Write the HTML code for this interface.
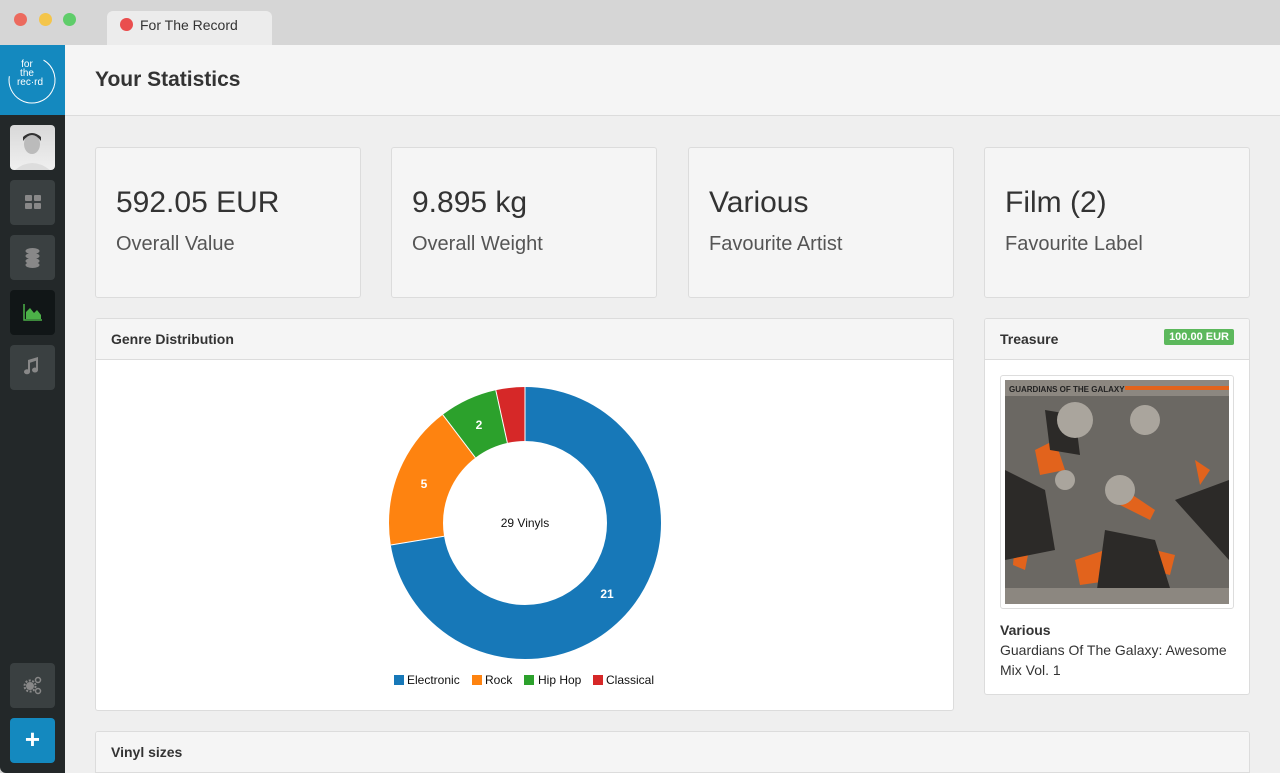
<!DOCTYPE html><html style="width:1280px;height:773px;overflow:hidden"><head><meta charset="utf-8"><style>
*{box-sizing:border-box;margin:0;padding:0}
body{width:1280px;height:773px;overflow:hidden;background:#d6d6d6;font-family:"Liberation Sans",sans-serif;position:relative}
.abs{position:absolute}
.dot{position:absolute;top:13px;width:13px;height:13px;border-radius:50%}
.tab{position:absolute;left:107px;top:11px;width:165px;height:34px;background:#ececec;border-radius:6px 6px 0 0;font-size:14px;color:#333;padding:6px 0 0 33px}
.side{position:absolute;left:0;top:45px;width:65px;height:728px;background:#232829;border-bottom-left-radius:6px}
.logo{position:absolute;left:0;top:0;width:65px;height:70px;background:#1489bf}
.sb{position:absolute;left:10px;width:45px;height:45px;border-radius:4px;background:#3a4041}
.main{position:absolute;left:65px;top:45px;width:1215px;height:728px;background:#efefef;overflow:hidden}
.hdr{position:absolute;left:0;top:0;width:1215px;height:71px;background:#f5f5f5;border-bottom:1px solid #dcdcdc;font-weight:bold;font-size:21px;color:#333;padding:23px 0 0 30px}
.card{position:absolute;top:102px;width:266px;height:151px;background:#f5f5f5;border:1px solid #dcdcdc;border-radius:3px;padding:38px 0 0 20px;color:#333}
.card .v{font-size:30px}
.card .l{font-size:20px;margin-top:13px;color:#555}
.panel{position:absolute;background:#fff;border:1px solid #dcdcdc;border-radius:3px;overflow:hidden}
.ph{height:41px;background:#f5f5f5;border-bottom:1px solid #dcdcdc;font-weight:bold;font-size:14px;color:#333;padding:12px 0 0 15px}
</style></head><body>
<div class="dot" style="left:14px;background:#ec6a5e"></div>
<div class="dot" style="left:39px;background:#f4c54a"></div>
<div class="dot" style="left:63px;background:#5fcd6a"></div>
<div class="tab"><span style="position:absolute;left:13px;top:7px;width:13px;height:13px;border-radius:50%;background:#ea4e4e"></span>For The Record</div>
<div class="side">
 <div class="logo"><svg width="65" height="70"><circle cx="32" cy="35" r="23" fill="none" stroke="#fff" stroke-width="1" stroke-dasharray="100 45" transform="rotate(-60 32 35)"/><text x="27" y="22" fill="#fff" font-size="10" text-anchor="middle" font-family="Liberation Sans">for</text><text x="27" y="31" fill="#fff" font-size="10" text-anchor="middle" font-family="Liberation Sans">the</text><text x="30" y="40" fill="#fff" font-size="10" text-anchor="middle" font-family="Liberation Sans">rec·rd</text></svg></div>
 <div class="sb" style="top:80px;background:linear-gradient(#d8d8d8,#f0f0f0)"><svg width="45" height="45"><ellipse cx="22" cy="19" rx="8" ry="10" fill="#bbb"/><path d="M13 16q9-12 18 0v-4q-9-8-18 0z" fill="#333"/><path d="M5 45q17-14 35 0z" fill="#ddd"/></svg></div>
 <div class="sb" style="top:135px"><svg width="45" height="45" fill="#888"><rect x="15" y="15" width="7" height="6" rx="1"/><rect x="24" y="15" width="7" height="6" rx="1"/><rect x="15" y="23" width="7" height="6" rx="1"/><rect x="24" y="23" width="7" height="6" rx="1"/></svg></div>
 <div class="sb" style="top:190px"><svg width="45" height="45" fill="#888"><ellipse cx="22.5" cy="16" rx="7" ry="3"/><ellipse cx="22.5" cy="21" rx="7" ry="3"/><ellipse cx="22.5" cy="26" rx="7" ry="3"/><ellipse cx="22.5" cy="30" rx="7" ry="3"/></svg></div>
 <div class="sb" style="top:245px;background:#111617"><svg width="45" height="45"><path d="M14 14v16h18" stroke="#4cb148" stroke-width="1.5" fill="none"/><path d="M16 29v-7l4-4 4 5 3-3 4 5v4z" fill="#4cb148"/></svg></div>
 <div class="sb" style="top:300px"><svg width="45" height="45" fill="#888"><path d="M18 15l10-3v13a3 2.5 0 1 1-2-2.3v-7l-6 2v9a3 2.5 0 1 1-2-2.3z"/></svg></div>
 <div class="sb" style="top:618px"><svg width="45" height="45" fill="#888"><circle cx="20" cy="23" r="4"/><circle cx="20" cy="23" r="5.5" fill="none" stroke="#888" stroke-width="2" stroke-dasharray="2 1.5"/><circle cx="28" cy="17" r="2.5" fill="none" stroke="#888" stroke-width="1.5"/><circle cx="28" cy="28" r="2.5" fill="none" stroke="#888" stroke-width="1.5"/></svg></div>
 <div class="sb" style="top:673px;background:#1489bf;color:#fff;font-size:26px;font-weight:bold;text-align:center;line-height:43px">+</div>
</div>
<div class="main">
 <div class="hdr">Your Statistics</div>
 <div class="card" style="left:30px"><div class="v">592.05 EUR</div><div class="l">Overall Value</div></div>
 <div class="card" style="left:326px"><div class="v">9.895 kg</div><div class="l">Overall Weight</div></div>
 <div class="card" style="left:623px"><div class="v">Various</div><div class="l">Favourite Artist</div></div>
 <div class="card" style="left:919px"><div class="v">Film (2)</div><div class="l">Favourite Label</div></div>
 <div class="panel" style="left:30px;top:273px;width:859px;height:393px"><div class="ph">Genre Distribution</div>
  <svg class="abs" style="left:0;top:0" width="859" height="393">
   <g transform="translate(429,204) rotate(-90)">
    <circle r="109" fill="none" stroke="#1778b8" stroke-width="54" stroke-dasharray="495.94 684.87"/>
    <circle r="109" fill="none" stroke="#fe8310" stroke-width="54" stroke-dasharray="0 495.94 118.08 684.87"/>
    <circle r="109" fill="none" stroke="#2ca12c" stroke-width="54" stroke-dasharray="0 614.02 47.23 684.87"/>
    <circle r="109" fill="none" stroke="#d62828" stroke-width="54" stroke-dasharray="0 661.25 23.62 684.87"/>
    <g stroke="#fff" stroke-width="1"><line x1="82" x2="136"/><line x1="82" x2="136" transform="rotate(260.69)"/><line x1="82" x2="136" transform="rotate(322.76)"/><line x1="82" x2="136" transform="rotate(347.59)"/></g>
   </g>
   <g font-size="12" fill="#fff" font-weight="bold" text-anchor="middle"><text x="511" y="279">21</text><text x="328" y="169">5</text><text x="383" y="110">2</text></g>
   <text x="429" y="208" font-size="12" text-anchor="middle" fill="#111">29 Vinyls</text>
   <g font-size="12" fill="#111"><rect x="298" y="356" width="10" height="10" fill="#1778b8"/><text x="311" y="365">Electronic</text><rect x="376" y="356" width="10" height="10" fill="#fe8310"/><text x="389" y="365">Rock</text><rect x="428" y="356" width="10" height="10" fill="#2ca12c"/><text x="442" y="365">Hip Hop</text><rect x="497" y="356" width="10" height="10" fill="#d62828"/><text x="510" y="365">Classical</text></g>
  </svg>
 </div>
 <div class="panel" style="left:919px;top:273px;width:266px;height:377px"><div class="ph">Treasure<span style="position:absolute;right:15px;top:10px;background:#5cb85c;color:#fff;font-size:11px;padding:2px 5px;border-radius:2px">100.00 EUR</span></div>
  <div class="abs" style="left:15px;top:56px;width:234px;height:234px;border:1px solid #ddd;border-radius:3px;padding:4px;background:#fff">
   <svg width="224" height="224"><rect width="224" height="224" fill="#6b6863"/><rect width="224" height="16" fill="#8c8780"/><text x="4" y="12" font-size="8" font-weight="bold" fill="#222">GUARDIANS OF THE GALAXY</text><rect x="120" y="6" width="104" height="4" fill="#e2631c"/>
   <g fill="#e2631c"><path d="M30 70l20-10 10 30-25 5z"/><path d="M120 110l30 20-5 10-30-15z"/><path d="M70 180l30-10 10 30-35 5z"/><path d="M150 170l20 5-5 20-20-5z"/><path d="M10 160l15 5-5 25-12-5z"/><path d="M190 80l15 10-10 15z"/></g>
   <g fill="#2c2a28"><path d="M0 90l40 20 10 60-50 10z"/><path d="M100 150l50 10 20 64h-80z"/><path d="M170 120l54-20v80z"/><path d="M40 30l30 5 5 40-30-5z"/></g>
   <g fill="#aaa59d"><circle cx="70" cy="40" r="18"/><circle cx="115" cy="110" r="15"/><circle cx="60" cy="100" r="10"/><circle cx="140" cy="40" r="15"/></g>
   <rect y="208" width="224" height="16" fill="#8c8780"/></svg>
  </div>
  <div class="abs" style="left:15px;top:301px;font-size:14px;color:#333;line-height:20px;width:240px"><b>Various</b><br>Guardians Of The Galaxy: Awesome Mix Vol. 1</div>
 </div>
 <div class="panel" style="left:30px;top:686px;width:1155px;height:50px"><div class="ph">Vinyl sizes</div></div>
</div>
</body></html>
